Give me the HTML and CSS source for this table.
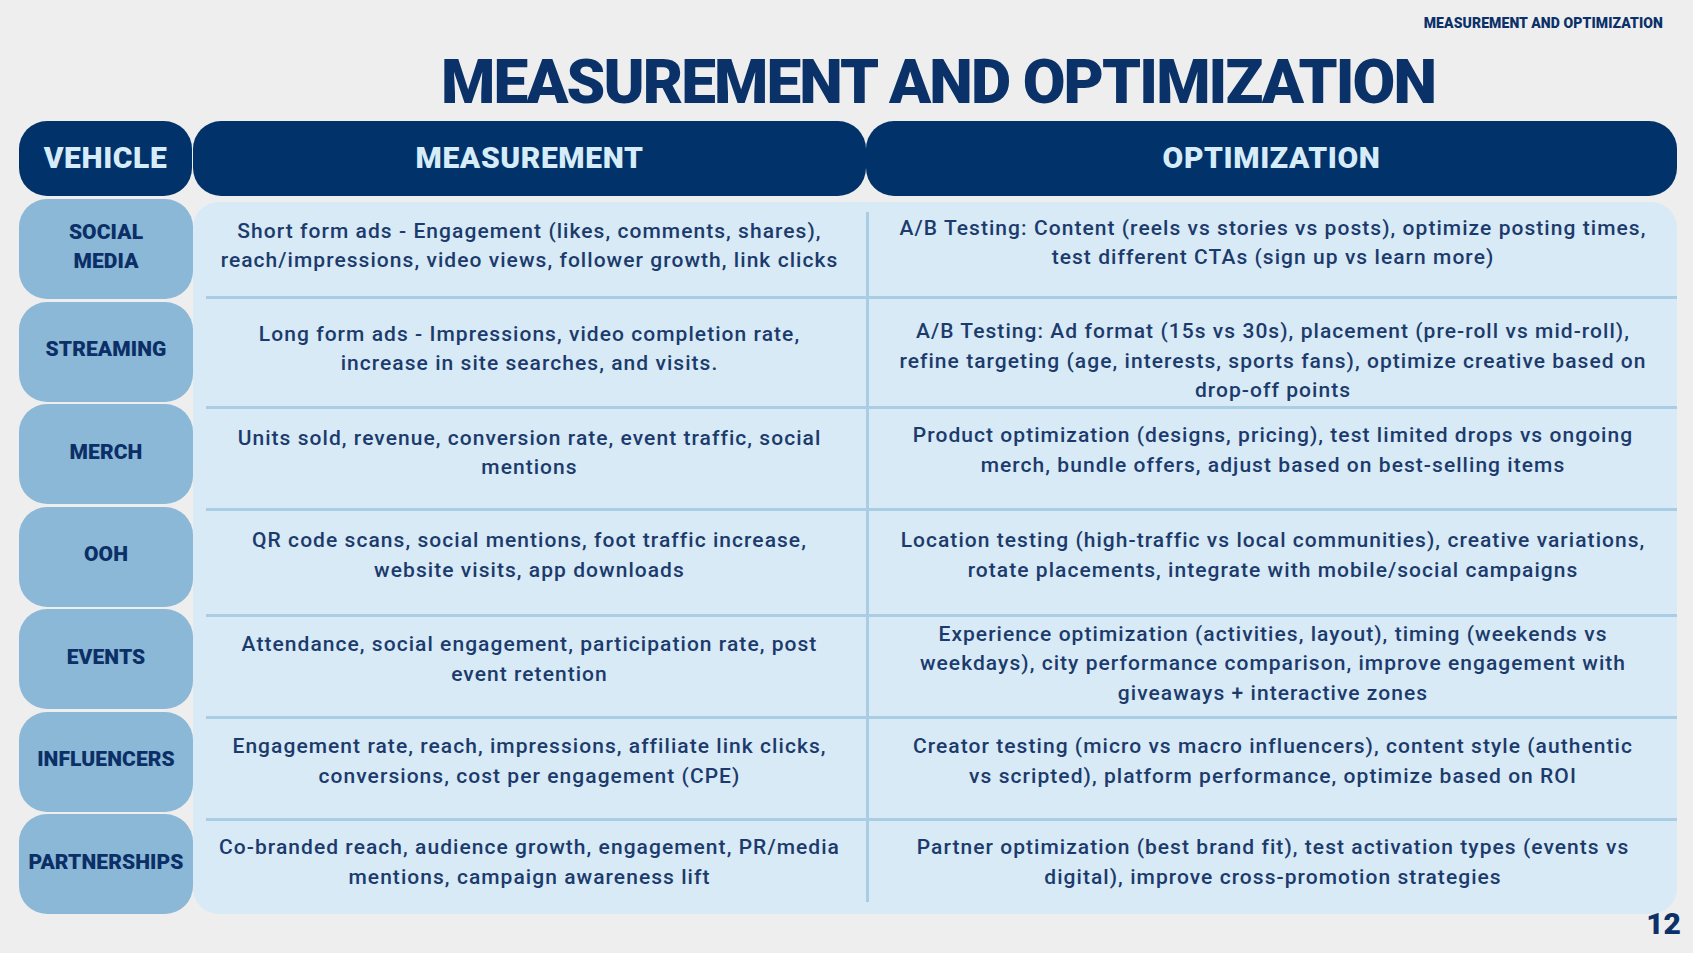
FILE: index.html
```html
<!DOCTYPE html>
<html lang="en">
<head>
<meta charset="utf-8">
<title>Measurement and Optimization</title>
<link rel="stylesheet" href="styles.css">
</head>
<body>
<div class="slide">
  <div class="topline">MEASUREMENT AND OPTIMIZATION</div>
  <h1 class="title">MEASUREMENT AND OPTIMIZATION</h1>
  <div class="table">
    <div class="head head-vehicle">VEHICLE</div>
    <div class="head">MEASUREMENT</div>
    <div class="head">OPTIMIZATION</div>

    <div class="vehicles">
      <div class="vcell">SOCIAL<br>MEDIA</div>
      <div class="vcell">STREAMING</div>
      <div class="vcell">MERCH</div>
      <div class="vcell">OOH</div>
      <div class="vcell">EVENTS</div>
      <div class="vcell">INFLUENCERS</div>
      <div class="vcell">PARTNERSHIPS</div>
    </div>

    <div class="panel">
      <div class="row r1">
        <div class="cell cell-m"><span>Short form ads - Engagement (likes, comments, shares),<br>reach/impressions, video views, follower growth, link clicks</span></div>
        <div class="cell cell-o cell-up"><span>A/B Testing: Content (reels vs stories vs posts), optimize posting times,<br>test different CTAs (sign up vs learn more)</span></div>
      </div>
      <div class="sep"></div>
      <div class="row r2">
        <div class="cell cell-m"><span>Long form ads - Impressions, video completion rate,<br>increase in site searches, and visits.</span></div>
        <div class="cell cell-o cell-low"><span>A/B Testing: Ad format (15s vs 30s), placement (pre-roll vs mid-roll),<br>refine targeting (age, interests, sports fans), optimize creative based on<br>drop-off points</span></div>
      </div>
      <div class="sep"></div>
      <div class="row r3">
        <div class="cell cell-m"><span>Units sold, revenue, conversion rate, event traffic, social<br>mentions</span></div>
        <div class="cell cell-o cell-up-s"><span>Product optimization (designs, pricing), test limited drops vs ongoing<br>merch, bundle offers, adjust based on best-selling items</span></div>
      </div>
      <div class="sep"></div>
      <div class="row r4">
        <div class="cell cell-m"><span>QR code scans, social mentions, foot traffic increase,<br>website visits, app downloads</span></div>
        <div class="cell cell-o"><span>Location testing (high-traffic vs local communities), creative variations,<br>rotate placements, integrate with mobile/social campaigns</span></div>
      </div>
      <div class="sep"></div>
      <div class="row r5">
        <div class="cell cell-m"><span>Attendance, social engagement, participation rate, post<br>event retention</span></div>
        <div class="cell cell-o cell-mid"><span>Experience optimization (activities, layout), timing (weekends vs<br>weekdays), city performance comparison, improve engagement with<br>giveaways + interactive zones</span></div>
      </div>
      <div class="sep"></div>
      <div class="row r6">
        <div class="cell cell-m"><span>Engagement rate, reach, impressions, affiliate link clicks,<br>conversions, cost per engagement (CPE)</span></div>
        <div class="cell cell-o"><span>Creator testing (micro vs macro influencers), content style (authentic<br>vs scripted), platform performance, optimize based on ROI</span></div>
      </div>
      <div class="sep"></div>
      <div class="row r7">
        <div class="cell cell-m"><span>Co-branded reach, audience growth, engagement, PR/media<br>mentions, campaign awareness lift</span></div>
        <div class="cell cell-o"><span>Partner optimization (best brand fit), test activation types (events vs<br>digital), improve cross-promotion strategies</span></div>
      </div>
    </div>
  </div>
  <div class="pagenum">12</div>
</div>
</body>
</html>
```

FILE: styles.css
```css
* {
  box-sizing: border-box;
}

html, body {
  margin: 0;
  padding: 0;
  background: #eeeeee;
}

.slide {
  width: 1693px;
  height: 953px;
  padding: 0 16px 0 19px;
  background: #eeeeee;
  font-family: Roboto, "Liberation Sans", sans-serif;
  color: #0b3168;
  overflow: hidden;
}

.topline {
  margin: 15px 14px 0 0;
  text-align: right;
  font-size: 14px;
  line-height: 17px;
  font-weight: 900;
  letter-spacing: 0.1px;
  color: #0b3168;
}

.title {
  margin: 19px 0 0 0;
  padding-left: 180px;
  text-align: center;
  font-size: 62px;
  line-height: 62px;
  font-weight: 900;
  letter-spacing: -1.9px;
  color: #0a3268;
}

.table {
  margin-top: 8px;
  display: grid;
  grid-template-columns: 174px 673px 811px;
  grid-template-rows: 75px auto;
}

.head {
  display: flex;
  align-items: center;
  justify-content: center;
  background: #02326a;
  border-radius: 28px;
  color: #d6ecf8;
  font-size: 30px;
  font-weight: 900;
  letter-spacing: 0.6px;
  padding-bottom: 2px;
}

.head-vehicle {
  margin-right: 1px;
}

.vehicles {
  margin-top: 3px;
  display: flex;
  flex-direction: column;
  gap: 2.5px;
}

.vcell {
  height: 100px;
  display: flex;
  align-items: center;
  justify-content: center;
  text-align: center;
  padding-bottom: 4px;
  background: #8ab8d6;
  border-radius: 28px;
  color: #0b2f66;
  font-size: 21px;
  line-height: 29px;
  font-weight: 900;
  letter-spacing: 0.1px;
}

.panel {
  grid-column: 2 / 4;
  margin-top: 6px;
  height: 712px;
  display: flex;
  flex-direction: column;
  border-radius: 26px;
  background:
    linear-gradient(#a9cde4, #a9cde4) no-repeat 673px 10px / 3px calc(100% - 22px),
    #d7eaf6;
}

.row {
  display: flex;
}

.r1 { flex: 0 0 94px; }
.r2 { flex: 0 0 101px; }
.r3 { flex: 0 0 99px; }
.r4 { flex: 0 0 103px; }
.r5 { flex: 0 0 99px; }
.r6 { flex: 0 0 99px; }
.r7 { flex: 1 1 auto; }

.sep {
  flex: 0 0 3px;
  margin-left: 13px;
  background: #a9cde4;
}

.cell {
  display: flex;
  align-items: center;
  justify-content: center;
  text-align: center;
  padding: 0 4px 6px;
  font-size: 21px;
  line-height: 29.5px;
  font-weight: 500;
  letter-spacing: 1.05px;
  color: #1c3b6c;
  white-space: nowrap;
}

.r3 .cell {
  padding-bottom: 10px;
}

.r4 .cell,
.r5 .cell,
.r6 .cell {
  padding-bottom: 13px;
}

.r7 .cell {
  padding-bottom: 9px;
}

.cell-m {
  width: 673px;
}

.cell-o {
  flex: 1;
  margin-left: 3px;
}

.r1 .cell-up {
  padding-bottom: 12px;
}

.r3 .cell-up-s {
  padding-bottom: 15px;
}

.r2 .cell-low {
  padding-bottom: 0;
  padding-top: 18px;
}

.r5 .cell-mid {
  padding-bottom: 4px;
  padding-top: 0;
}

.pagenum {
  margin: -5px -4px 0 0;
  text-align: right;
  font-size: 30px;
  line-height: 30px;
  font-weight: 900;
  color: #0b3168;
}
```
